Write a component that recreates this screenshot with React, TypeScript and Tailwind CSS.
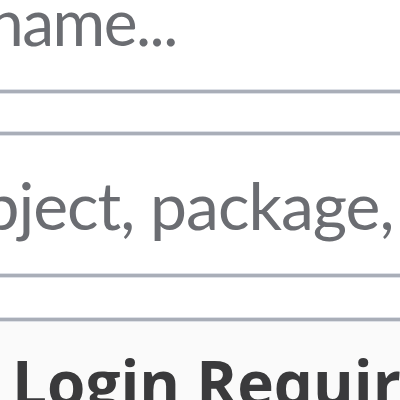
const placeholderFont = { fontFamily: 'Lato, "Open Sans", sans-serif' }
const headingFont = { fontFamily: '"Open Sans", "Noto Sans", sans-serif' }

function Rule() {
  return <div className="h-[5px] border-y border-[#dde0e6] bg-[#a9aeb8]" />
}

export default function App() {
  return (
    <div className="h-[400px] w-[400px] overflow-hidden bg-white" style={placeholderFont}>
      <div className="h-[89px] overflow-hidden">
        <p className="-mt-[10px] -ml-[12px] whitespace-nowrap text-[64px] leading-[64px] tracking-[-1.5px] text-[#6b6d72]">
          name...
        </p>
      </div>
      <Rule />
      <div className="h-[37px]" />
      <Rule />
      <div className="h-[137px] overflow-hidden pt-[36px]">
        <p className="-ml-[54px] whitespace-nowrap text-[66px] leading-[66px] tracking-[-1px] text-[#6b6d72]">
          object, package, class
        </p>
      </div>
      <Rule />
      <div className="h-[39px]" />
      <Rule />
      <div className="h-[78px] overflow-hidden bg-[#fafafa] pt-[29px] pl-[12px]" style={headingFont}>
        <h2 className="whitespace-nowrap text-[62px] font-bold leading-[62px] text-[#3a3a3c]">
          Login Required
        </h2>
      </div>
    </div>
  )
}
